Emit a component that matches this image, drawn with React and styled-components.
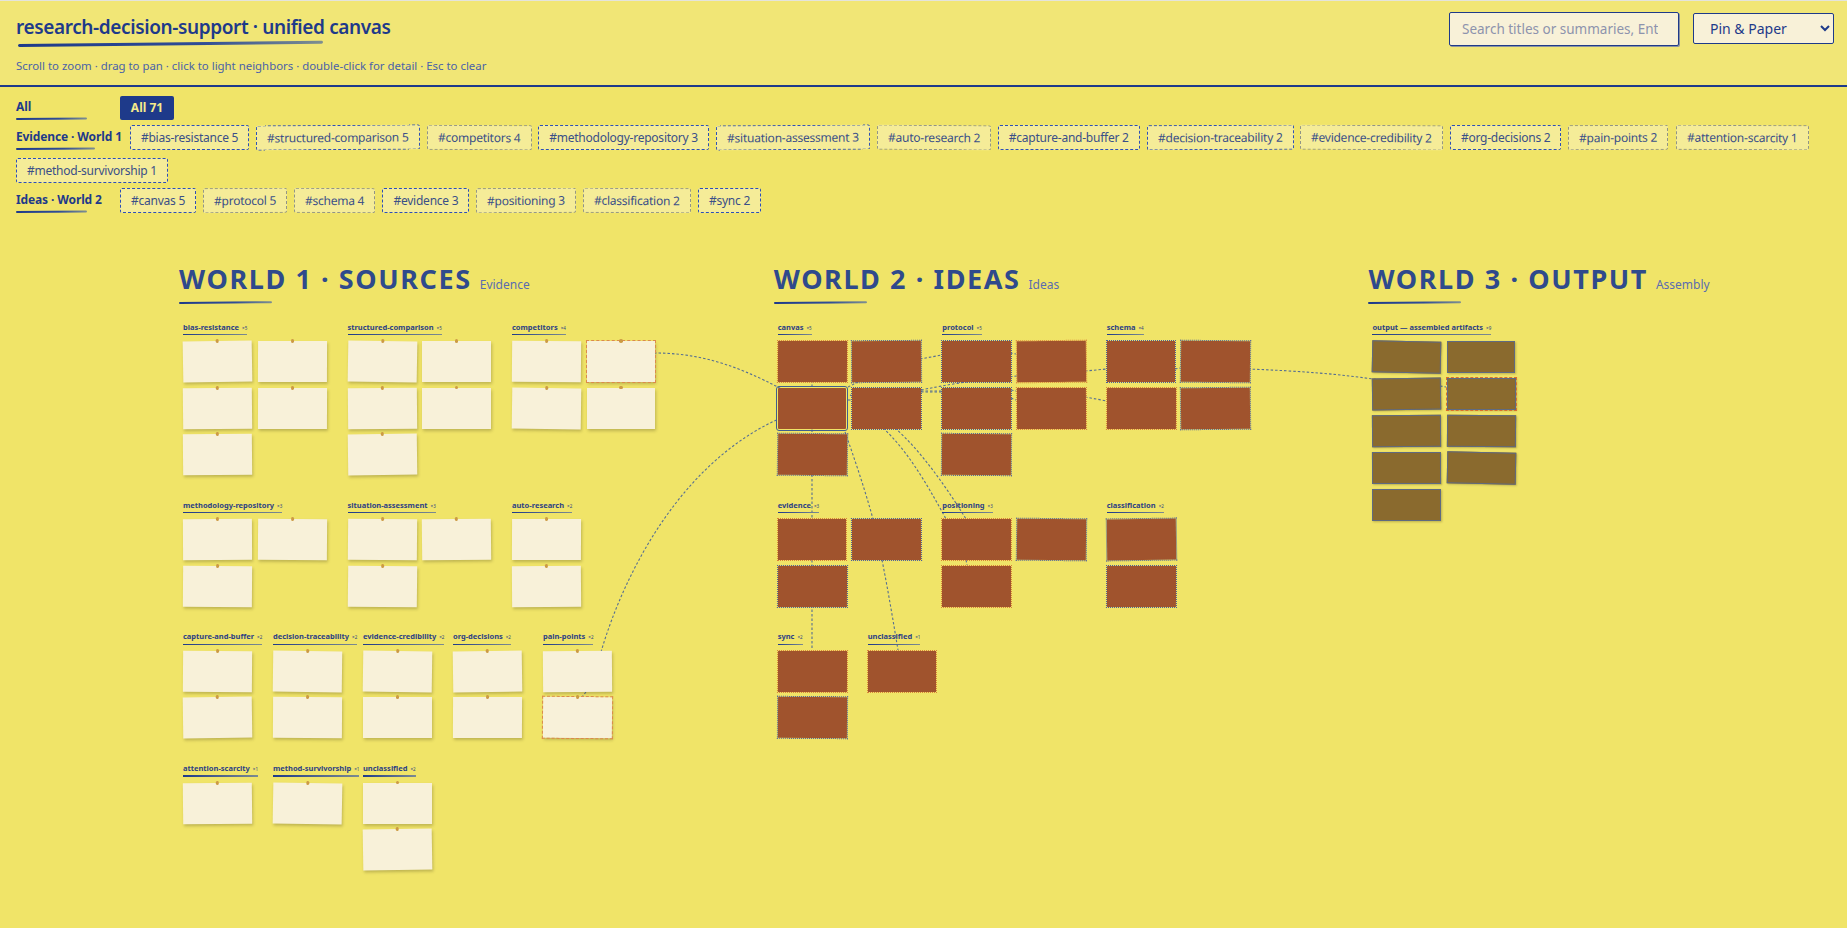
import React from "react";
import styled, { createGlobalStyle } from "styled-components";

const INK = "#1e3a8a";
const FONT = `"Noto Sans", "Open Sans", "Liberation Sans", sans-serif`;

const Global = createGlobalStyle`
  html, body { margin: 0; padding: 0; background: #f0e468; }
  body { font-family: ${FONT}; color: ${INK}; overflow: hidden; }
  * { box-sizing: border-box; }
`;

const Page = styled.div`
  position: relative;
  width: 1847px;
  height: 928px;
  overflow: hidden;
  background: #f0e468;
`;

const Header = styled.header`
  height: 87px;
  padding: 11px 13px 0 16px;
  display: flex;
  justify-content: space-between;
  align-items: flex-start;
  background: #f1e676;
  border-top: 1px solid #e4e4dc;
  border-bottom: 2px solid ${INK};
`;

const TitleBlock = styled.div`
  display: flex;
  flex-direction: column;
`;

const Title = styled.h1`
  margin: 0;
  font-size: 19px;
  line-height: 30px;
  font-weight: 600;
  color: ${INK};
  letter-spacing: -0.38px;
`;

const Scribble = styled.div`
  width: ${(p) => p.$w}px;
  height: ${(p) => p.$h || 2}px;
  border-radius: 2px;
  background: linear-gradient(90deg, ${INK} 0%, #2f4c96 60%, #7f8f90 100%);
  transform: rotate(${(p) => p.$tilt || -0.4}deg);
  transform-origin: left center;
`;

const TitleRule = styled(Scribble)`
  margin: 2px 0 0 2px;
`;

const Hint = styled.p`
  margin: 11px 0 0;
  font-size: 11.4px;
  line-height: 16px;
  color: #4a62a8;
`;

const Controls = styled.div`
  display: flex;
  align-items: flex-start;
  gap: 14px;
`;

const Search = styled.input`
  width: 230px;
  height: 34px;
  padding: 0 20px 0 12px;
  background: #f8f1d8;
  border: 1.5px solid ${INK};
  border-radius: 2px;
  box-shadow: 1px 1px 0 #8b93a0;
  font-family: ${FONT};
  font-size: 13.5px;
  color: ${INK};
  &::placeholder { color: #8d93ad; opacity: 1; }
`;

const Skin = styled.select`
  width: 141px;
  height: 31px;
  margin-top: 1px;
  padding: 0 0 0 12px;
  background-color: #f8f1d8;
  border: 1px solid ${INK};
  border-radius: 2px;
  font-family: ${FONT};
  font-size: 14px;
  color: ${INK};
`;

const Filters = styled.nav`
  padding: 8px 16px 0;
  display: flex;
  flex-direction: column;
  gap: 5px;
`;

const FilterRow = styled.div`
  display: flex;
  flex-wrap: wrap;
  align-items: center;
  gap: 7.5px 7px;
`;

const RowLabel = styled.div`
  min-width: 96px;
  margin: 3px 1px 0 0;
  font-size: 12px;
  line-height: 18px;
  font-weight: 700;
  letter-spacing: -0.12px;
  color: ${INK};
`;

const LabelRule = styled(Scribble)`
  margin-top: 2px;
`;

const AllButton = styled.button`
  width: 54px;
  height: 24px;
  padding: 0;
  border: 0;
  border-radius: 2px;
  background: ${INK};
  color: #f5ea8a;
  font-family: ${FONT};
  font-size: 12px;
  font-weight: 700;
`;

const Chip = styled.button`
  height: 25px;
  padding: 0 10px;
  background: #f5ec98;
  border: 1px dashed ${(p) => (p.$faded ? "#8f9388" : "#2c4fb8")};
  border-radius: 2px;
  font-family: ${FONT};
  font-size: 12px;
  letter-spacing: -0.24px;
  color: #3a4f88;
  white-space: nowrap;
  transform: rotate(${(p) => p.$tilt}deg);
`;

const Stage = styled.main`
  position: relative;
  z-index: 1;
  display: flex;
  padding: 48.5px 0 0 179px;
`;

const World = styled.section`
  width: 594.7px;
  flex: none;
`;

const WorldHead = styled.div`
  display: flex;
  align-items: baseline;
  gap: 8px;
`;

const WorldName = styled.h2`
  margin: 0;
  font-size: 27px;
  line-height: 36px;
  font-weight: 700;
  letter-spacing: 1.6px;
  color: #2f4a8c;
`;

const WorldKind = styled.span`
  font-size: 12px;
  color: #5a6cb0;
`;

const WorldRule = styled(Scribble)`
  margin-top: 5px;
`;

const GroupRows = styled.div`
  display: flex;
  flex-direction: column;
  gap: 25.5px;
  margin-top: 18.7px;
  padding-left: 4px;
`;

const GroupRow = styled.div`
  display: flex;
  align-items: flex-start;
  gap: 21.5px;
`;

const Group = styled.div`
  flex: none;
  display: flex;
  flex-direction: column;
  align-items: flex-start;
  width: ${(p) => p.$cols * 74.5 - 6}px;
`;

const GroupLabel = styled.div`
  margin-bottom: 6px;
  font-size: 7.5px;
  line-height: 9px;
  font-weight: 700;
  white-space: nowrap;
  color: #2d4184;
  &::after {
    content: "";
    display: block;
    height: 1.3px;
    margin-top: 1.5px;
    background: linear-gradient(90deg, ${INK}, #7c8b90);
  }
`;

const Count = styled.span`
  margin-left: 3px;
  font-size: 4.5px;
  font-weight: 400;
`;

const CardGrid = styled.div`
  display: grid;
  grid-template-columns: repeat(${(p) => p.$cols}, 68.5px);
  column-gap: 6px;
  row-gap: ${(p) => (p.$short ? "4.8px" : "5.3px")};
`;

const Card = styled.article`
  position: relative;
  height: 41px;
  transform: rotate(${(p) => p.$tilt}deg);
`;

const PaperCard = styled(Card)`
  background: #f8f1d9;
  box-shadow: 1px 2px 3px rgba(70, 60, 20, 0.28);
  outline: ${(p) => (p.$hot ? "1px dashed #dc8a4c" : "none")};
  outline-offset: 0.5px;
  &::before {
    content: "";
    position: absolute;
    top: -2px;
    left: 50%;
    width: 3.5px;
    height: 3.5px;
    margin-left: -1.75px;
    border-radius: 50%;
    background: #cc9a45;
  }
`;

const IdeaCard = styled(Card)`
  background: #a0532d;
  outline: 1px dotted ${(p) => (p.$hot ? "#d9803a" : "#4a5c9c")};
  outline-offset: 0;
`;

const HubCard = styled(IdeaCard)`
  outline: 1px solid #3f5f8f;
  outline-offset: 1px;
  border-radius: 1px;
`;

const OutputCard = styled(Card)`
  height: 32px;
  background: #8a6a2e;
  border: 1px solid #5f6a80;
  box-shadow: 1px 1px 2px rgba(70, 60, 20, 0.3);
  outline: ${(p) => (p.$hot ? "1px dashed #d9702e" : "none")};
  outline-offset: 0;
`;

const Wires = styled.svg`
  position: absolute;
  top: 0;
  left: 0;
  z-index: 0;
  pointer-events: none;
`;

const evidenceChips = [
  ["#bias-resistance 5", 0, 0], ["#structured-comparison 5", 0, -0.4], ["#competitors 4", 1, 0.3],
  ["#methodology-repository 3", 0, 0], ["#situation-assessment 3", 0, -0.4], ["#auto-research 2", 1, 0.4],
  ["#capture-and-buffer 2", 0, 0], ["#decision-traceability 2", 0, -0.3], ["#evidence-credibility 2", 1, 0.4],
  ["#org-decisions 2", 0, 0], ["#pain-points 2", 1, -0.3], ["#attention-scarcity 1", 1, 0.3],
  ["#method-survivorship 1", 0, 0],
];
const ideaChips = [
  ["#canvas 5", 0, 0], ["#protocol 5", 1, -0.4], ["#schema 4", 1, 0.2], ["#evidence 3", 0, 0],
  ["#positioning 3", 1, -0.4], ["#classification 2", 1, 0.3], ["#sync 2", 0, 0],
];

const worlds = [
  {
    name: "WORLD 1 · SOURCES", kind: "Evidence", type: "paper",
    rows: [
      [
        { n: "bias-resistance", c: 5, cols: 2, t: [-1, 0.2, -0.6, 0.2, -0.5] },
        { n: "structured-comparison", c: 5, cols: 2, t: [1, 0, -0.5, 0, -0.7] },
        { n: "competitors", c: 4, cols: 2, t: [0.5, 0, 0.8, 0], hot: [1] },
      ],
      [
        { n: "methodology-repository", c: 3, cols: 2, t: [-0.3, 0.4, 0.4] },
        { n: "situation-assessment", c: 3, cols: 2, t: [0.5, -0.6, 0.6] },
        { n: "auto-research", c: 2, cols: 1, t: [0.2, -0.4] },
      ],
      [
        { n: "capture-and-buffer", c: 2, cols: 1, t: [0.4, -0.8] },
        { n: "decision-traceability", c: 2, cols: 1, t: [0.7, 0.3] },
        { n: "evidence-credibility", c: 2, cols: 1, t: [0.8, 0] },
        { n: "org-decisions", c: 2, cols: 1, t: [-0.8, 0.2] },
        { n: "pain-points", c: 2, cols: 1, t: [-0.4, 0.4], hot: [1] },
      ],
      [
        { n: "attention-scarcity", c: 1, cols: 1, t: [-0.6] },
        { n: "method-survivorship", c: 1, cols: 1, t: [1] },
        { n: "unclassified", c: 2, cols: 1, t: [0, -0.9] },
      ],
    ],
  },
  {
    name: "WORLD 2 · IDEAS", kind: "Ideas", type: "idea",
    rows: [
      [
        { n: "canvas", c: 5, cols: 2, t: [0.2, -0.3, 0, 0, 0.6], hot: [0] },
        { n: "protocol", c: 5, cols: 2, t: [0, -0.5, 0, -0.2, 0.3], hot: [1, 3] },
        { n: "schema", c: 4, cols: 2, t: [0, 0.5, 0.1, -0.5], hot: [2] },
      ],
      [
        { n: "evidence", c: 3, cols: 2, t: [0, -0.2, 0.2], hot: [0] },
        { n: "positioning", c: 3, cols: 2, t: [0, 0.6, 0], hot: [0, 2] },
        { n: "classification", c: 2, cols: 1, t: [-0.7, 0.1] },
      ],
      [
        { n: "sync", c: 2, cols: 1, t: [0.1, 0.3], hot: [0] },
        { n: "unclassified", c: 1, cols: 1, t: [0], hot: [0] },
      ],
    ],
  },
  {
    name: "WORLD 3 · OUTPUT", kind: "Assembly", type: "output",
    rows: [
      [
        { n: "output — assembled artifacts", c: 9, cols: 2, t: [1.1, 0, -0.7, 0.1, -0.4, 0.5, -0.2, 1.1, 0], hot: [3] },
      ],
    ],
  },
];

const wires = [
  "M654 353 C700 353 745 365 812 407",
  "M601 652 C625 570 690 440 812 407",
  "M848 387 L860 381",
  "M920 359 L942 355",
  "M1010 353 L1016 354",
  "M1085 371 L1107 369",
  "M1175 369 L1180 368",
  "M1248 369 C1300 371 1340 374 1380 380",
  "M1440 386 L1446 387",
  "M848 400 L852 400",
  "M850 395 L858 398",
  "M921 390 C965 381 990 379 1017 376",
  "M921 391 L942 391",
  "M921 392 L942 392",
  "M1011 390 L1016 391",
  "M1011 398 L1016 400",
  "M1085 397 L1107 401",
  "M812 380 L812 650",
  "M845 432 C855 460 865 490 873 519",
  "M882 560 C888 590 893 620 898 650",
  "M883 428 C905 448 925 480 946 519",
  "M895 428 C920 450 945 485 966 519",
  "M966 560 L967 565",
  "M586 692 L582 697",
];

function renderCard(type, tilt, hot, key, hub) {
  if (type === "paper") return <PaperCard key={key} $tilt={tilt} $hot={hot} />;
  if (type === "output") return <OutputCard key={key} $tilt={tilt} $hot={hot} />;
  if (hub) return <HubCard key={key} $tilt={tilt} />;
  return <IdeaCard key={key} $tilt={tilt} $hot={hot} />;
}

function CardGroup({ group, type }) {
  return (
    <Group $cols={group.cols}>
      <GroupLabel>
        {group.n}
        <Count>×{group.c}</Count>
      </GroupLabel>
      <CardGrid $cols={group.cols} $short={type === "output"}>
        {group.t.map((tilt, i) =>
          renderCard(type, tilt, (group.hot || []).includes(i), i, group.n === "canvas" && i === 2)
        )}
      </CardGrid>
    </Group>
  );
}

export default function App() {
  return (
    <Page>
      <Global />
      <Header>
        <TitleBlock>
          <Title>research-decision-support · unified canvas</Title>
          <TitleRule $w={305} $h={3} $tilt={-0.6} />
          <Hint>Scroll to zoom · drag to pan · click to light neighbors · double-click for detail · Esc to clear</Hint>
        </TitleBlock>
        <Controls>
          <Search placeholder="Search titles or summaries, Enter to jump" />
          <Skin defaultValue="Pin & Paper">
            <option>Pin & Paper</option>
          </Skin>
        </Controls>
      </Header>
      <Filters>
        <FilterRow>
          <RowLabel>
            All
            <LabelRule $w={71} />
          </RowLabel>
          <AllButton>All 71</AllButton>
        </FilterRow>
        <FilterRow>
          <RowLabel>
            Evidence · World 1
            <LabelRule $w={79} />
          </RowLabel>
          {evidenceChips.map(([text, faded, tilt]) => (
            <Chip key={text} $faded={!!faded} $tilt={tilt}>{text}</Chip>
          ))}
        </FilterRow>
        <FilterRow>
          <RowLabel>
            Ideas · World 2
            <LabelRule $w={71} />
          </RowLabel>
          {ideaChips.map(([text, faded, tilt]) => (
            <Chip key={text} $faded={!!faded} $tilt={tilt}>{text}</Chip>
          ))}
        </FilterRow>
      </Filters>
      <Wires width="1847" height="928" viewBox="0 0 1847 928" fill="none">
        {wires.map((d) => (
          <path key={d} d={d} stroke="#566f92" strokeWidth="1.1" strokeDasharray="2.5 2" />
        ))}
      </Wires>
      <Stage>
        {worlds.map((w) => (
          <World key={w.name}>
            <WorldHead>
              <WorldName>{w.name}</WorldName>
              <WorldKind>{w.kind}</WorldKind>
            </WorldHead>
            <WorldRule $w={93} $h={2} $tilt={-0.5} />
            <GroupRows>
              {w.rows.map((row, i) => (
                <GroupRow key={i}>
                  {row.map((g) => (
                    <CardGroup key={g.n} group={g} type={w.type} />
                  ))}
                </GroupRow>
              ))}
            </GroupRows>
          </World>
        ))}
      </Stage>
    </Page>
  );
}
